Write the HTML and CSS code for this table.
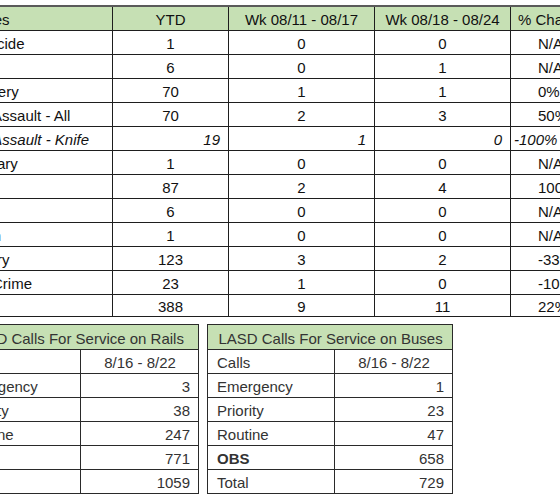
FILE: index.html
```html
<!DOCTYPE html>
<html>
<head>
<meta charset="utf-8">
<link rel="stylesheet" href="styles.css">
</head>
<body>
<div class="sheet">
  <table class="crimes">
    <colgroup>
      <col class="c-name"><col class="c-ytd"><col class="c-wk1"><col class="c-wk2"><col class="c-pct">
    </colgroup>
    <thead>
      <tr><th class="name">Crimes</th><th>YTD</th><th>Wk 08/11 - 08/17</th><th>Wk 08/18 - 08/24</th><th class="pct">% Change</th></tr>
    </thead>
    <tbody>
      <tr><td class="name">Homicide</td><td>1</td><td>0</td><td>0</td><td class="pct">N/A</td></tr>
      <tr><td class="name">Rape</td><td>6</td><td>0</td><td>1</td><td class="pct">N/A</td></tr>
      <tr><td class="name">Robbery</td><td>70</td><td>1</td><td>1</td><td class="pct">0%</td></tr>
      <tr><td class="name">Agg Assault - All</td><td>70</td><td>2</td><td>3</td><td class="pct">50%</td></tr>
      <tr class="sub"><td class="name">Agg Assault - Knife</td><td>19</td><td>1</td><td>0</td><td class="pct">-100%</td></tr>
      <tr><td class="name">Burglary</td><td>1</td><td>0</td><td>0</td><td class="pct">N/A</td></tr>
      <tr><td class="name">Theft</td><td>87</td><td>2</td><td>4</td><td class="pct">100%</td></tr>
      <tr><td class="name">GTA</td><td>6</td><td>0</td><td>0</td><td class="pct">N/A</td></tr>
      <tr><td class="name">Arson</td><td>1</td><td>0</td><td>0</td><td class="pct">N/A</td></tr>
      <tr><td class="name">Battery</td><td>123</td><td>3</td><td>2</td><td class="pct">-33%</td></tr>
      <tr><td class="name">Sex Crime</td><td>23</td><td>1</td><td>0</td><td class="pct">-100%</td></tr>
      <tr class="total"><td class="name">Total</td><td>388</td><td>9</td><td>11</td><td class="pct">22%</td></tr>
    </tbody>
  </table>

  <div class="calls">
    <table class="cfs rails">
      <colgroup><col class="c-label"><col class="c-val"></colgroup>
      <thead><tr><th colspan="2">LASD Calls For Service on Rails</th></tr></thead>
      <tbody>
        <tr><td>Calls</td><td class="range">8/16 - 8/22</td></tr>
        <tr><td>Emergency</td><td class="num">3</td></tr>
        <tr><td>Priority</td><td class="num">38</td></tr>
        <tr><td>Routine</td><td class="num">247</td></tr>
        <tr><td class="strong">OBS</td><td class="num">771</td></tr>
        <tr><td>Total</td><td class="num">1059</td></tr>
      </tbody>
    </table>
    <table class="cfs">
      <colgroup><col class="c-label"><col class="c-val"></colgroup>
      <thead><tr><th colspan="2">LASD Calls For Service on Buses</th></tr></thead>
      <tbody>
        <tr><td>Calls</td><td class="range">8/16 - 8/22</td></tr>
        <tr><td>Emergency</td><td class="num">1</td></tr>
        <tr><td>Priority</td><td class="num">23</td></tr>
        <tr><td>Routine</td><td class="num">47</td></tr>
        <tr><td class="strong">OBS</td><td class="num">658</td></tr>
        <tr><td>Total</td><td class="num">729</td></tr>
      </tbody>
    </table>
  </div>
</div>
</body>
</html>
```

FILE: styles.css
```css
html, body {
  margin: 0;
  padding: 0;
  background: #ffffff;
  overflow: hidden;
}

body {
  font-family: "Liberation Sans", Arial, sans-serif;
  font-size: 15px;
  color: #111111;
}

.sheet {
  width: 560px;
  height: 498px;
  overflow: hidden;
}

/* ---------- crimes table ---------- */
.crimes {
  border-collapse: collapse;
  table-layout: fixed;
  width: 647px;
  margin: 5px 0 0 -47px;
}

.c-name { width: 159px; }
.c-ytd { width: 116px; }
.c-wk1 { width: 146px; }
.c-wk2 { width: 136px; }
.c-pct { width: 90px; }

.crimes th,
.crimes td {
  border: 1px solid #1e1e1e;
  padding: 3px 8px 0;
  line-height: 20px;
  font-weight: normal;
  white-space: nowrap;
  overflow: hidden;
  text-align: center;
}

.crimes thead th {
  background: #c6e0b4;
}

.crimes thead tr {
  border-top: 2px solid #5a5a5a;
}

.crimes .name {
  text-align: left;
}

.crimes td.pct {
  text-align: left;
  padding-left: 27px;
}

.crimes th.pct {
  text-align: left;
  padding-left: 7px;
}

.crimes .sub td {
  font-style: italic;
  text-align: right;
}

.crimes .sub td.name {
  text-align: left;
}

.crimes .sub td.pct {
  text-align: left;
  padding-left: 3px;
}

.crimes .total td {
  line-height: 18px;
}

/* ---------- calls for service ---------- */
.calls {
  display: flex;
  align-items: flex-start;
  gap: 8px;
  margin: 7px 0 0 -48px;
}

.cfs {
  border-collapse: collapse;
  table-layout: fixed;
  width: 245px;
  color: #333333;
}

.c-label { width: 127px; }
.c-val { width: 118px; }

.rails {
  width: 246px;
}

.rails .c-label {
  width: 128px;
}

.cfs th,
.cfs td {
  border: 1px solid #2a2a2a;
  padding: 3px 8px 0 9px;
  line-height: 20px;
  font-weight: normal;
  white-space: nowrap;
  text-align: left;
}

.cfs th {
  background: #c6e0b4;
  text-align: center;
  padding-top: 4px;
  line-height: 20px;
}

.cfs .range {
  text-align: center;
}

.cfs .num {
  text-align: right;
}

.cfs .strong {
  font-weight: bold;
}
```
